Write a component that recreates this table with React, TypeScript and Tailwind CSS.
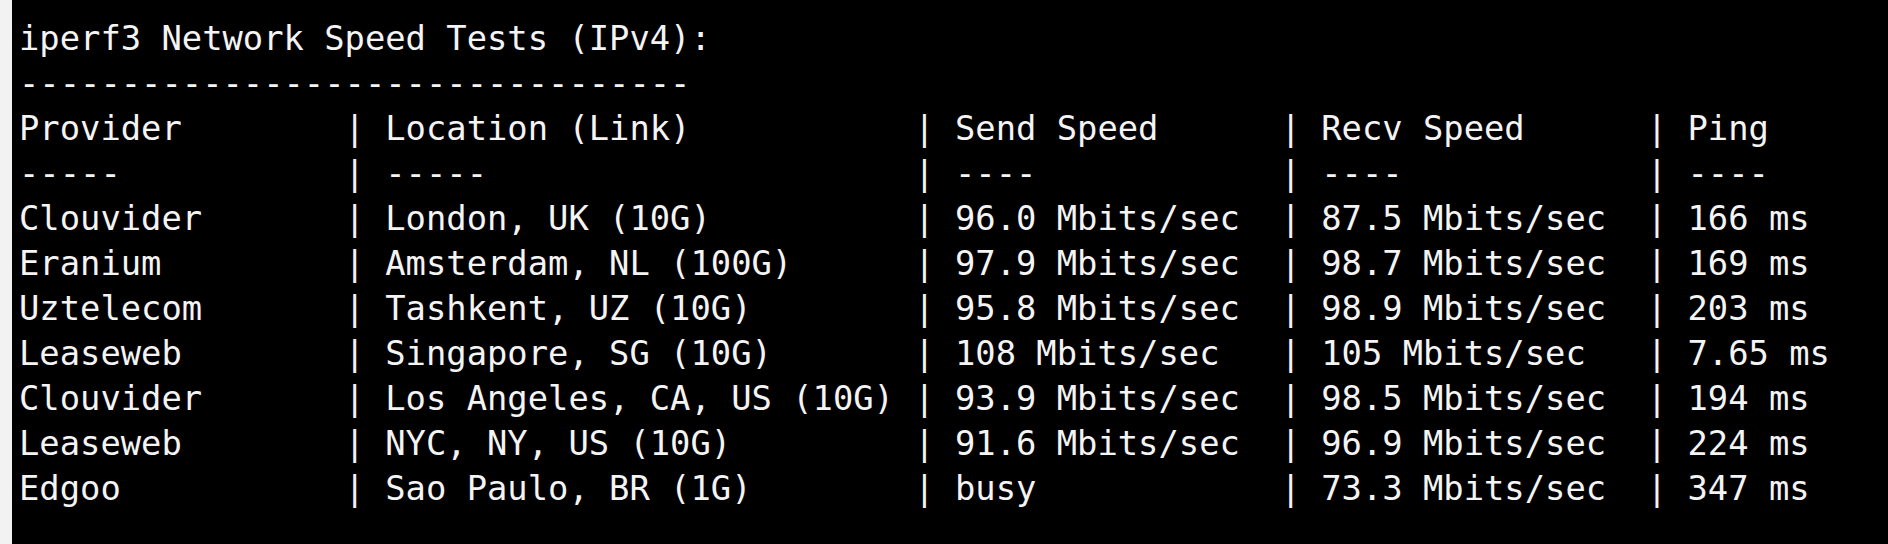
import React from "react";

const pad = (s: string, n: number) => s + " ".repeat(Math.max(0, n - s.length));

const row = (a: string, b: string, c: string, d: string, e: string) =>
  `${pad(a, 15)} | ${pad(b, 25)} | ${pad(c, 15)} | ${pad(d, 15)} | ${e}`;

const rows: [string, string, string, string, string][] = [
  ["Clouvider", "London, UK (10G)", "96.0 Mbits/sec", "87.5 Mbits/sec", "166 ms"],
  ["Eranium", "Amsterdam, NL (100G)", "97.9 Mbits/sec", "98.7 Mbits/sec", "169 ms"],
  ["Uztelecom", "Tashkent, UZ (10G)", "95.8 Mbits/sec", "98.9 Mbits/sec", "203 ms"],
  ["Leaseweb", "Singapore, SG (10G)", "108 Mbits/sec", "105 Mbits/sec", "7.65 ms"],
  ["Clouvider", "Los Angeles, CA, US (10G)", "93.9 Mbits/sec", "98.5 Mbits/sec", "194 ms"],
  ["Leaseweb", "NYC, NY, US (10G)", "91.6 Mbits/sec", "96.9 Mbits/sec", "224 ms"],
  ["Edgoo", "Sao Paulo, BR (1G)", "busy", "73.3 Mbits/sec", "347 ms"],
];

const lines = [
  "iperf3 Network Speed Tests (IPv4):",
  "-".repeat(33),
  row("Provider", "Location (Link)", "Send Speed", "Recv Speed", "Ping"),
  row("-----", "-----", "----", "----", "----"),
  ...rows.map((r) => row(...r)),
];

export default function App() {
  return (
    <div className="flex h-[544px] w-[1888px] overflow-hidden bg-black">
      <div className="w-[12px] shrink-0 bg-[#f2f2f2]" />
      <div className="flex-1 bg-black pl-[7px] pt-[16px]">
        <pre className="m-0 font-['DejaVu_Sans_Mono',monospace] text-[33.8px] leading-[45px] text-[#f4f4f4]">
          {lines.map((l, i) => (
            <div key={i}>{l}</div>
          ))}
        </pre>
      </div>
    </div>
  );
}
